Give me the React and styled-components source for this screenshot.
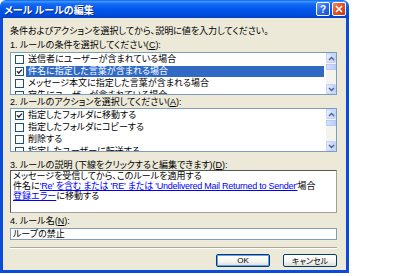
import React from 'react';
import styled, { createGlobalStyle } from 'styled-components';

const GlobalStyle = createGlobalStyle`
  html, body {
    margin: 0;
    padding: 0;
    background: #fff;
  }
  body {
    font-family: "Liberation Sans", "Noto Sans CJK JP", sans-serif;
    font-size: 9px;
    font-feature-settings: "palt";
    color: #000;
  }
`

const Dialog = styled.div`
  width: 349px;
  height: 273px;
  display: flex;
  flex-direction: column;
`

const TitleBar = styled.div`
  height: 18px;
  flex: none;
  display: flex;
  align-items: center;
  padding: 0 3px 0 4px;
  border-radius: 6px 6px 0 0;
  background: linear-gradient(to bottom, #0a5fea 0%, #3d95ff 8%, #1468f2 22%, #0057e8 55%, #004bdc 85%, #0040c8 100%);
`

const Title = styled.div`
  flex: 1;
  color: #fff;
  font-family: "Noto Sans CJK JP", sans-serif;
  font-weight: bold;
  font-size: 10px;
  text-shadow: 1px 1px 0 #0a2a8a;
  white-space: nowrap;
`

const CaptionButtons = styled.div`
  display: flex;
  gap: 2px;
`

const CaptionButton = styled.div`
  width: 12px;
  height: 12px;
  border: 1px solid #fff;
  border-radius: 2px;
  display: flex;
  align-items: center;
  justify-content: center;
  color: #fff;
  font-family: "Liberation Sans", sans-serif;
  font-weight: bold;
  font-size: 10px;
  background: ${(p) =>
    p.$close
      ? 'linear-gradient(135deg, #f08a66 0%, #e0542c 45%, #c43c14 100%)'
      : 'linear-gradient(135deg, #6fa2ff 0%, #2d6df0 45%, #1a50d4 100%)'};
`

const Body = styled.div`
  flex: 1;
  background: #ece9d8;
  border: 3px solid #0a4bdb;
  border-top: none;
  padding: 7px 9px 0 7px;
  display: flex;
  flex-direction: column;
`

const Intro = styled.div`
  line-height: 12px;
  white-space: nowrap;
`

const Label = styled.div`
  line-height: 10px;
  margin-top: ${(p) => p.$mt}px;
  white-space: nowrap;
`

const Key = styled.span`
  text-decoration: underline;
`

const ListBox = styled.div`
  margin-top: ${(p) => p.$mt}px;
  height: ${(p) => p.$h}px;
  box-sizing: border-box;
  border: 1px solid #7f9db9;
  background: #fff;
  display: flex;
  overflow: hidden;
`

const Rows = styled.div`
  flex: 1;
  display: flex;
  flex-direction: column;
  overflow: hidden;
`

const Row = styled.div`
  height: 12px;
  flex: none;
  display: flex;
  align-items: center;
  padding-left: 4px;
`

const Box = styled.div`
  width: 7px;
  height: 7px;
  flex: none;
  border: 1px solid #1c5180;
  background: #fff;
  display: flex;
  align-items: center;
  justify-content: center;
`

const RowText = styled.span`
  flex: 1;
  margin: 0 2px 0 2px;
  padding-left: 2px;
  line-height: 11px;
  white-space: nowrap;
  background: ${(p) => (p.$selected ? '#316ac5' : 'transparent')};
  color: ${(p) => (p.$selected ? '#fff' : '#000')};
`

const ScrollBar = styled.div`
  width: 10px;
  flex: none;
  display: flex;
  flex-direction: column;
  background: #f4f3ee;
`

const ScrollButton = styled.div`
  height: 10px;
  box-sizing: border-box;
  border: 1px solid #c3d3fd;
  border-radius: 1px;
  background: linear-gradient(to right, #e3ebfd, #c1d2f9);
  display: flex;
  align-items: center;
  justify-content: center;
`

const Thumb = styled.div`
  height: 6px;
  margin-top: 1px;
  box-sizing: border-box;
  border: 1px solid #b8cbf6;
  background: linear-gradient(to right, #d4e0fc, #bdcff8);
`

const Track = styled.div`
  flex: 1;
`

const Description = styled.div`
  height: 43px;
  box-sizing: border-box;
  background: #fff;
  border: 1px solid;
  border-color: #555 #a0a0a0 #a0a0a0 #555;
  padding: 0 2px;
  line-height: 10px;
  white-space: nowrap;
`

const Link = styled.span`
  color: #0000ff;
  text-decoration: underline;
  letter-spacing: ${(p) => (p.$tight ? '-0.25px' : 'normal')};
`

const TextInput = styled.div`
  margin-top: 2px;
  height: 12px;
  box-sizing: border-box;
  border: 1px solid #7f9db9;
  background: #fff;
  padding-left: 2px;
  line-height: 10px;
`

const Separator = styled.div`
  margin-top: 7px;
  height: 1px;
  background: #aca899;
  border-bottom: 1px solid #fff;
`

const ButtonRow = styled.div`
  margin-top: 5px;
  display: flex;
  justify-content: flex-end;
  gap: 13px;
`

const Button = styled.div`
  width: 54px;
  height: 13px;
  box-sizing: border-box;
  border: 1px solid #003c74;
  border-radius: 2px;
  background: linear-gradient(to bottom, #fff 0%, #f4f4f0 60%, #dcdcd4 100%);
  box-shadow: ${(p) => (p.$default ? 'inset 0 0 0 1px #6d9eeb' : 'none')};
  display: flex;
  align-items: center;
  justify-content: center;
  font-size: 8px;
`

function Arrow({ up }) {
  return (
    <svg width="7" height="5" viewBox="0 0 7 5">
      <path
        d={up ? 'M1 4 L3.5 1.5 L6 4' : 'M1 1 L3.5 3.5 L6 1'}
        fill="none"
        stroke="#4d6185"
        strokeWidth="1.4"
      />
    </svg>
  )
}

function Check() {
  return (
    <svg width="7" height="7" viewBox="0 0 7 7">
      <path d="M1 3.2 L2.8 5 L6 1.6" fill="none" stroke="#222" strokeWidth="1.3" />
    </svg>
  )
}

function CheckList({ items, mt, h }) {
  return (
    <ListBox $mt={mt} $h={h}>
      <Rows>
        {items.map((item) => (
          <Row key={item.text}>
            <Box>{item.checked && <Check />}</Box>
            <RowText $selected={item.selected}>{item.text}</RowText>
          </Row>
        ))}
      </Rows>
      <ScrollBar>
        <ScrollButton><Arrow up /></ScrollButton>
        <Thumb />
        <Track />
        <ScrollButton><Arrow /></ScrollButton>
      </ScrollBar>
    </ListBox>
  )
}

const conditions = [
  { text: '送信者にユーザーが含まれている場合' },
  { text: '件名に指定した言葉が含まれる場合', checked: true, selected: true },
  { text: 'メッセージ本文に指定した言葉が含まれる場合' },
  { text: '宛先にユーザーが含まれている場合' },
]

const actions = [
  { text: '指定したフォルダに移動する', checked: true },
  { text: '指定したフォルダにコピーする' },
  { text: '削除する' },
  { text: '指定したユーザーに転送する' },
]

const App = () => {
  return (
    <>
      <GlobalStyle />
      <Dialog>
        <TitleBar>
          <Title>メール ルールの編集</Title>
          <CaptionButtons>
            <CaptionButton>?</CaptionButton>
            <CaptionButton $close>
              <svg width="8" height="8" viewBox="0 0 8 8">
                <path d="M1 1 L7 7 M7 1 L1 7" stroke="#fff" strokeWidth="1.6" />
              </svg>
            </CaptionButton>
          </CaptionButtons>
        </TitleBar>
        <Body>
          <Intro>条件およびアクションを選択してから、説明に値を入力してください。</Intro>
          <Label $mt={3}>1. ルールの条件を選択してください(<Key>C</Key>):</Label>
          <CheckList items={conditions} mt={2} h={43} />
          <Label $mt={2}>2. ルールのアクションを選択してください(<Key>A</Key>):</Label>
          <CheckList items={actions} mt={1} h={44} />
          <Label $mt={8}>3. ルールの説明 (下線をクリックすると編集できます)(<Key>D</Key>):</Label>
          <Description>
            <div>メッセージを受信してから、このルールを適用する</div>
            <div>
              件名に<Link $tight>'Re' を含む または 'RE' または 'Undelivered Mail Returned to Sender'</Link>場合
            </div>
            <div>
              <Link>登録エラー</Link>に移動する
            </div>
          </Description>
          <Label $mt={3}>4. ルール名(<Key>N</Key>):</Label>
          <TextInput>ループの禁止</TextInput>
          <Separator />
          <ButtonRow>
            <Button $default>OK</Button>
            <Button>キャンセル</Button>
          </ButtonRow>
        </Body>
      </Dialog>
    </>
  )
}

export default App
